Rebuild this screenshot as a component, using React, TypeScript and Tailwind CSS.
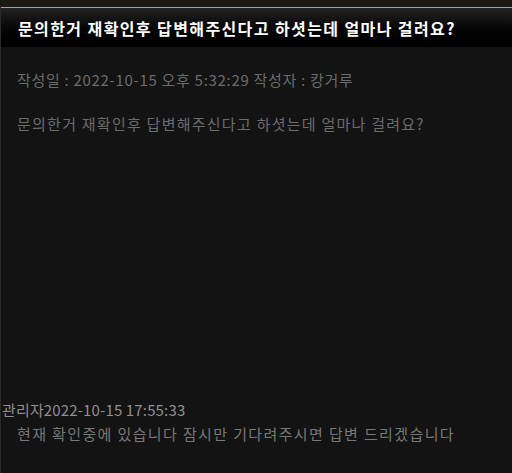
export default function App() {
  const font = { fontFamily: '"Malgun Gothic", "Noto Sans CJK KR", "Noto Sans", sans-serif' };
  return (
    <div className="h-[473px] w-[512px] overflow-hidden bg-[#131313]" style={font}>
      <div className="h-[7px] bg-[#1a1a1a]" />
      <div className="border-l border-[#2a2a2a] h-[466px] flex flex-col">
        <div className="border-t border-[#f39800] h-[40px] bg-gradient-to-b from-[#242424] to-[#000000] flex items-center pl-[17px]">
          <h1 className="text-[16px] font-bold text-white leading-none tracking-[1.4px]">
            문의한거 재확인후 답변해주신다고 하셧는데 얼마나 걸려요?
          </h1>
        </div>
        <div className="pl-[16px] pt-[23px] text-[15px] leading-[20px] text-[#6c6c6c]">
          <p className="tracking-[0.7px]">작성일 : 2022-10-15 오후 5:32:29 작성자 : 캉거루</p>
          <p className="mt-[24px] tracking-[1.25px]">문의한거 재확인후 답변해주신다고 하셧는데 얼마나 걸려요?</p>
        </div>
        <div className="mt-auto mb-[27px] text-[15px] leading-[24px]">
          <p className="pl-[1px] text-[#909090] tracking-[0.15px]">관리자2022-10-15 17:55:33</p>
          <p className="pl-[16px] text-[#787878] tracking-[1.37px]">현재 확인중에 있습니다 잠시만 기다려주시면 답변 드리겠습니다</p>
        </div>
      </div>
    </div>
  );
}
